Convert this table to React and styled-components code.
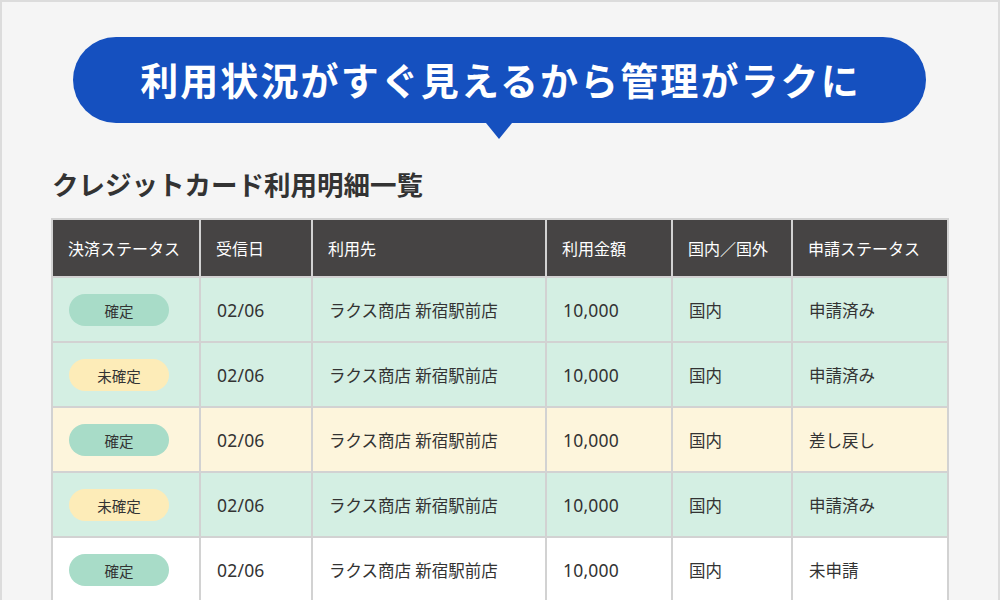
import React from 'react'
import styled, { createGlobalStyle } from 'styled-components'

const GlobalStyle = createGlobalStyle`
  html, body {
    margin: 0;
    padding: 0;
    background: #f5f5f5;
  }
  * {
    box-sizing: border-box;
  }
`

const Page = styled.div`
  width: 1000px;
  height: 600px;
  overflow: hidden;
  background-color: #f5f5f5;
  border: 2px solid #dcdcdc;
  border-bottom: none;
  padding: 35px 0 0 49px;
  font-family: "Noto Sans", "Noto Sans CJK JP", sans-serif;
  color: #333;
`

const Bubble = styled.div`
  position: relative;
  margin-left: 22px;
  width: 853px;
  height: 86px;
  border-radius: 43px;
  background-color: #1550bf;
  display: flex;
  align-items: center;
  justify-content: center;

  &::after {
    content: '';
    position: absolute;
    left: 413px;
    bottom: -16px;
    border-left: 13.5px solid transparent;
    border-right: 13.5px solid transparent;
    border-top: 16px solid #1550bf;
  }
`

const Catch = styled.h1`
  margin: 0;
  font-family: "Noto Sans CJK JP", sans-serif;
  font-weight: 700;
  font-size: 38px;
  letter-spacing: 2.1px;
  line-height: 1;
  color: #fff;
  transform: translate(1px, -1px);
`

const Heading = styled.h2`
  margin: 43px 0 16px 1px;
  font-family: "Noto Sans CJK JP", sans-serif;
  font-weight: 700;
  font-size: 26.5px;
  line-height: 36px;
  color: #333;
`

const Table = styled.div`
  width: 898px;
  display: grid;
  grid-template-columns: 146px 110px 232px 124px 118px 154px;
  grid-template-rows: 56px;
  grid-auto-rows: 63px;
  gap: 2px;
  padding: 2px;
  background-color: #d2d2d2;
`

const HeadCell = styled.div`
  display: flex;
  align-items: center;
  padding-left: 15px;
  background-color: #464444;
  color: #fff;
  font-size: 16px;
  white-space: nowrap;
`

const tones = {
  green: '#d4efe3',
  yellow: '#fdf5dc',
  white: '#ffffff'
}

const Cell = styled.div`
  display: flex;
  align-items: center;
  padding-left: 16px;
  background-color: ${props => tones[props.tone]};
  font-size: 16.5px;
  color: #333;
  white-space: nowrap;
`

const Num = styled.span`
  font-family: "Noto Sans", sans-serif;
  font-size: 17.5px;
  letter-spacing: 0.2px;
`

const Pill = styled.span`
  display: inline-flex;
  align-items: center;
  justify-content: center;
  width: 100px;
  height: 32px;
  border-radius: 16px;
  background-color: ${props => props.fixed ? '#a8dcc8' : '#fdecb8'};
  font-family: "Noto Sans CJK JP", sans-serif;
  font-size: 14.5px;
  color: #333;
  margin-top: 1px;
`

const headers = ['決済ステータス', '受信日', '利用先', '利用金額', '国内／国外', '申請ステータス']

const rows = [
  { tone: 'green', fixed: true, status: '申請済み' },
  { tone: 'green', fixed: false, status: '申請済み' },
  { tone: 'yellow', fixed: true, status: '差し戻し' },
  { tone: 'green', fixed: false, status: '申請済み' },
  { tone: 'white', fixed: true, status: '未申請' }
]

const App = () => {
  return (
    <Page>
      <GlobalStyle />
      <Bubble>
        <Catch>利用状況がすぐ見えるから管理がラクに</Catch>
      </Bubble>
      <Heading>クレジットカード利用明細一覧</Heading>
      <Table>
        {headers.map(h => <HeadCell key={h}>{h}</HeadCell>)}
        {rows.map((row, i) => (
          <React.Fragment key={i}>
            <Cell tone={row.tone}>
              <Pill fixed={row.fixed}>{row.fixed ? '確定' : '未確定'}</Pill>
            </Cell>
            <Cell tone={row.tone}><Num>02/06</Num></Cell>
            <Cell tone={row.tone}>ラクス商店 新宿駅前店</Cell>
            <Cell tone={row.tone}><Num>10,000</Num></Cell>
            <Cell tone={row.tone}>国内</Cell>
            <Cell tone={row.tone}>{row.status}</Cell>
          </React.Fragment>
        ))}
      </Table>
    </Page>
  )
}

export default App
